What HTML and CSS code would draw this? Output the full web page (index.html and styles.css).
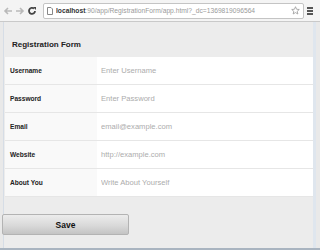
FILE: index.html
```html
<!DOCTYPE html>
<html lang="en">
  <head>
    <meta charset="UTF-8" />
    <title>Registration Form</title>
    <link rel="stylesheet" href="styles.css">
  </head>
  <body>
    <div class="toolbar">
      <div class="nav">
        <svg class="nav_btn" width="10" height="10" viewBox="0 0 10 10"><path d="M9 5H2M5 2L2 5l3 3" fill="none" stroke="#b9b9b9" stroke-width="1.6"/></svg>
        <svg class="nav_btn" width="10" height="10" viewBox="0 0 10 10"><path d="M1 5h7M5 2l3 3-3 3" fill="none" stroke="#b9b9b9" stroke-width="1.6"/></svg>
        <svg class="nav_btn" width="10" height="10" viewBox="0 0 10 10"><path d="M8 5a3 3 0 1 1-1-2.3" fill="none" stroke="#444" stroke-width="1.8"/><path d="M6 1h3v3z" fill="#444"/></svg>
      </div>
      <div class="omnibox">
        <svg width="6" height="8" viewBox="0 0 6 8"><path d="M.5.5h3.5l1.5 1.5v5.5h-5z" fill="#fff" stroke="#888"/></svg>
        <span class="url"><b>localhost</b>:90/app/RegistrationForm/app.html?_dc=1369819096564</span>
        <svg class="star" width="9" height="9" viewBox="0 0 10 10"><path d="M5 .8l1.2 2.8 3 .3-2.3 2 .7 3-2.6-1.6-2.6 1.6.7-3-2.3-2 3-.3z" fill="none" stroke="#999" stroke-width=".9"/></svg>
      </div>
      <div class="menu"><span></span><span></span><span></span></div>
    </div>

    <div class="content">
      <div class="title">Registration Form</div>
      <div class="form">
        <div class="row">
          <label for="username">Username</label>
          <input type="text" id="username" placeholder="Enter Username">
        </div>
        <div class="row">
          <label for="password">Password</label>
          <input type="password" id="password" placeholder="Enter Password">
        </div>
        <div class="row">
          <label for="email">Email</label>
          <input type="text" id="email" placeholder="email@example.com">
        </div>
        <div class="row">
          <label for="website">Website</label>
          <input type="text" id="website" placeholder="http://example.com">
        </div>
        <div class="row">
          <label for="about">About You</label>
          <input type="text" id="about" placeholder="Write About Yourself">
        </div>
      </div>
      <button class="saveBtn">Save</button>
    </div>
    <div class="statusline"></div>
  </body>
</html>
```

FILE: styles.css
```css
* {
    padding: 0;
    margin: 0;
    box-sizing: border-box;
  }
  body {
    width: 320px;
    height: 250px;
    overflow: hidden;
    background: #e9e9e9;
    font-family: "Liberation Sans", Arial, sans-serif;
    display: flex;
    flex-direction: column;
  }

  /* browser bar */
  .toolbar {
    height: 22px;
    display: flex;
    align-items: center;
    background: #f4f4f4;
    border-bottom: 1px solid #c9c9c9;
    padding: 0 4px 0 3px;
  }
  .nav {
    display: flex;
    align-items: center;
    gap: 2px;
    width: 40px;
  }
  .omnibox {
    flex: 1;
    height: 16px;
    display: flex;
    align-items: center;
    gap: 3px;
    background: #fff;
    border: 1px solid #c4c4c4;
    border-radius: 2px;
    padding: 0 3px;
  }
  .url {
    flex: 1;
    font-size: 6.7px;
    line-height: 10px;
    color: #9a9a9a;
    white-space: nowrap;
    overflow: hidden;
  }
  .url b {
    color: #333;
  }
  .menu {
    width: 12px;
    display: flex;
    flex-direction: column;
    align-items: center;
    gap: 1px;
  }
  .menu span {
    display: block;
    width: 6px;
    height: 2px;
    background: #555;
  }

  /* page */
  .content {
    flex: 1;
    margin: 0 4px 0 3px;
    padding-left: 1px;
    background: #ececec;
    border-left: 1px solid #d6dde6;
    border-right: 3px solid #dfe6ee;
  }
  .title {
    height: 35px;
    padding: 18px 0 0 7px;
    font-size: 8px;
    font-weight: bold;
    color: #222;
  }
  .form {
    background: #fff;
  }
  .row {
    height: 28px;
    display: flex;
    border-bottom: 1px solid #e6e6e6;
  }
  .row label {
    width: 92px;
    display: flex;
    align-items: center;
    padding-left: 5px;
    background: #f9f9f9;
    font-size: 6.6px;
    font-weight: bold;
    color: #222;
  }
  .row input {
    flex: 1;
    border: none;
    outline: none;
    padding-left: 4px;
    font-family: "Liberation Sans", Arial, sans-serif;
    font-size: 7.6px;
    background: #fff;
  }
  .row input::placeholder {
    color: #acacac;
  }
  .saveBtn {
    display: block;
    width: 127px;
    height: 21px;
    margin: 17px 0 0 -3px;
    background-image: linear-gradient(#ececec 0%, #d9d9d9 55%, #c4c4c4 100%);
    border: 1px solid #b3b3b3;
    border-radius: 2px;
    font-family: "Liberation Sans", Arial, sans-serif;
    font-size: 8.5px;
    font-weight: bold;
    color: #111;
  }
  .statusline {
    height: 2px;
    background: #a9b4c0;
  }
```
